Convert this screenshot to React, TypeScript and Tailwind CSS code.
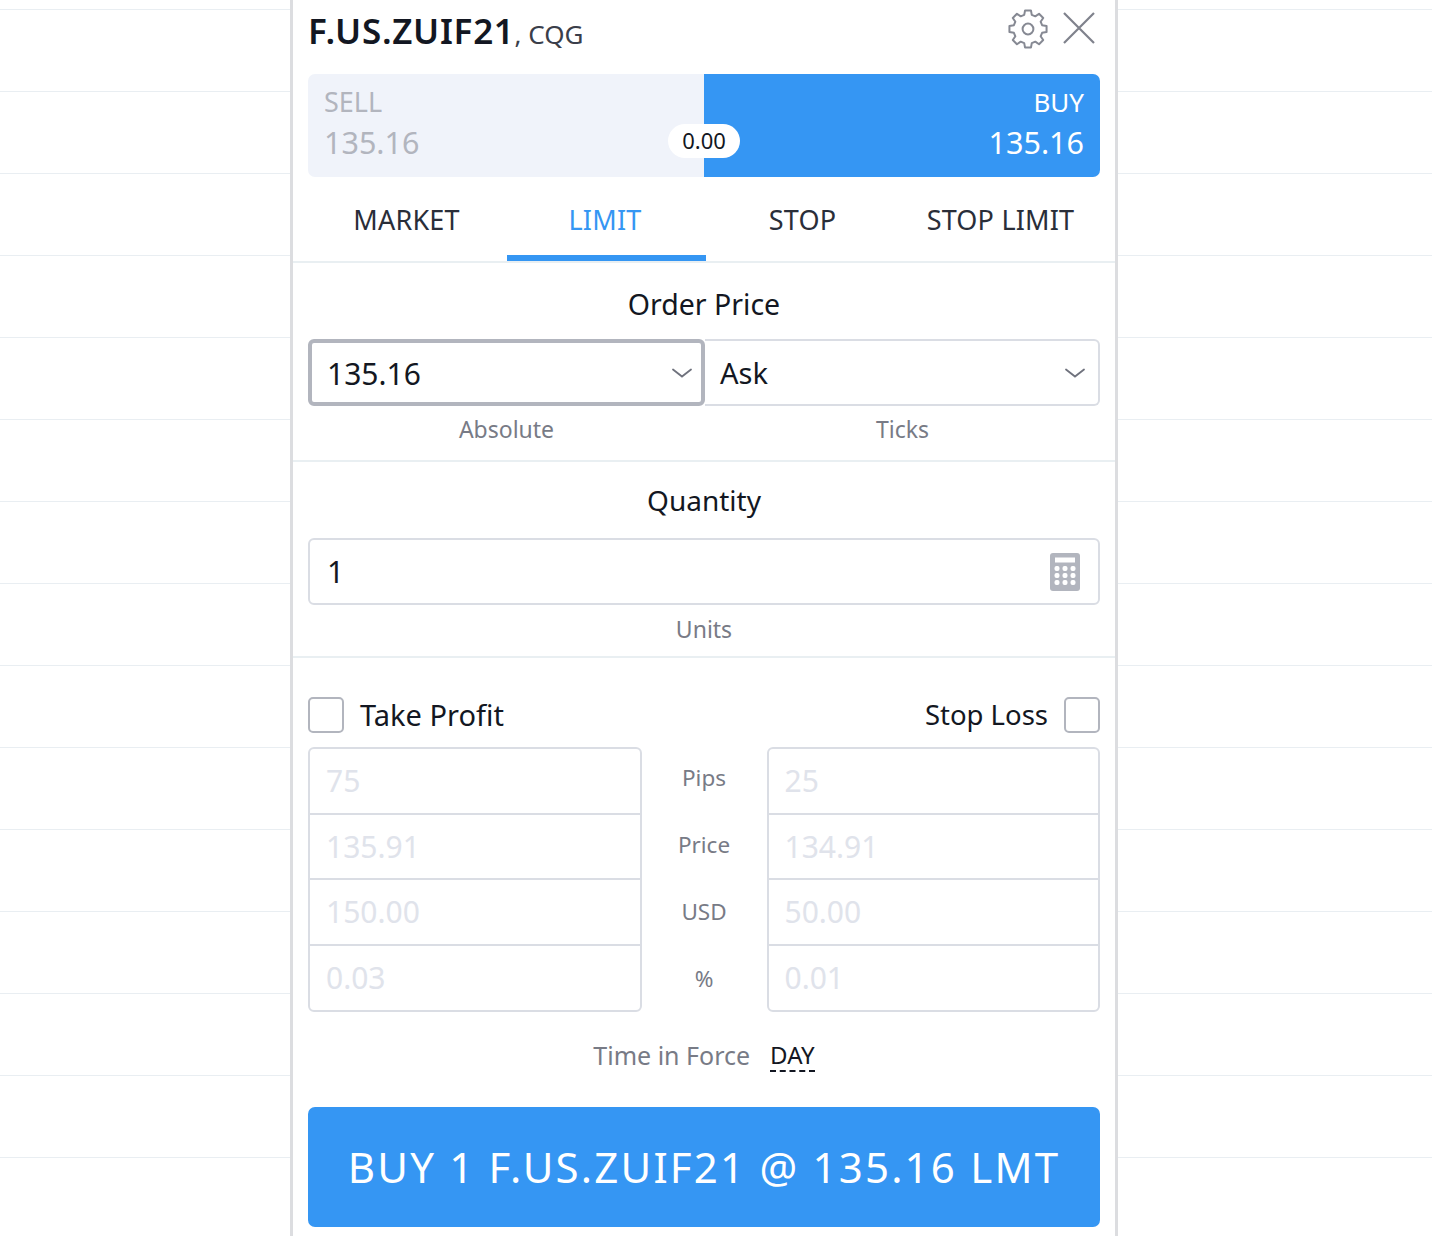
import React from "react";

const ff = "font-['Noto_Sans','Liberation_Sans',sans-serif]";

function Chevron() {
  return (
    <svg width="22" height="12" viewBox="0 0 22 12" fill="none" stroke="#6f727d" strokeWidth="1.8" strokeLinecap="round">
      <path d="M2 2.5 L11 9.5 L20 2.5" />
    </svg>
  );
}

function gearPath() {
  const pts: string[] = [];
  const p = (r: number, deg: number) => {
    const a = (deg * Math.PI) / 180;
    return `${(22 + r * Math.cos(a)).toFixed(2)} ${(22 + r * Math.sin(a)).toFixed(2)}`;
  };
  for (let i = 0; i < 8; i++) {
    const c = -90 + i * 45;
    pts.push(p(14.6, c - 15), p(18.8, c - 9), p(18.8, c + 9), p(14.6, c + 15));
  }
  return `M${pts.join(" L")} Z`;
}

function Gear() {
  return (
    <svg width="44" height="44" viewBox="0 0 44 44" fill="none" stroke="#868993" strokeWidth="2" strokeLinejoin="round">
      <circle cx="22" cy="22" r="5.4" />
      <path d={gearPath()} />
    </svg>
  );
}

function Calc() {
  return (
    <svg width="30" height="38" viewBox="0 0 30 38">
      <rect x="0" y="0" width="30" height="38" rx="3" fill="#b2b5be" />
      <rect x="5" y="4.5" width="20" height="5" fill="#fff" />
      {[13, 20, 27].map((y) =>
        [4.5, 12.5, 20.5].map((x) => <rect key={`${x}-${y}`} x={x} y={y} width="5" height="5" rx="2" fill="#fff" />)
      )}
    </svg>
  );
}

const rowClass = ["h-[63.5px]", "h-[65.5px] border-t-2", "h-[65.5px] border-t-2", "flex-1 border-t-2"];

function Stack({ values }: { values: string[] }) {
  return (
    <div className="flex-1 rounded-[6px] border-2 border-[#dadde4] flex flex-col overflow-hidden">
      {values.map((v, i) => (
        <div key={v} className={`flex items-center pl-[16px] text-[30px] text-[#e0e3eb] border-[#dadde4] ${rowClass[i]}`}>
          {v}
        </div>
      ))}
    </div>
  );
}

const tabs = [
  { t: "MARKET", c: "w-[199px] pr-[2px] pt-[2px] text-[#2a2e39]" },
  { t: "LIMIT", c: "w-[199px] pr-[3px] pt-[8px] text-[#3596f3] border-b-[6px] border-[#3596f3]" },
  { t: "STOP", c: "w-[197px] pr-[4px] pt-[2px] text-[#2a2e39]" },
  { t: "STOP LIMIT", c: "w-[197px] pr-[2px] pt-[2px] text-[#2a2e39]" },
];

export default function App() {
  return (
    <div
      className={`${ff} w-[1432px] h-[1236px] overflow-hidden bg-white bg-[repeating-linear-gradient(to_bottom,#ffffff_0px,#ffffff_9px,#e9eef2_9px,#e9eef2_10px,#ffffff_10px,#ffffff_82px)]`}
    >
      <div className="w-[828px] h-[1236px] ml-[290px] bg-white border-x-[3px] border-[#dcdde0] px-[15px] flex flex-col text-[#131722]">
        {/* header */}
        <div className="h-[74px] shrink-0 flex items-start justify-between">
          <div className="pt-[8px] flex items-baseline whitespace-nowrap">
            <span className="text-[35px] leading-[46px] font-semibold tracking-[0.7px]">F.US.ZUIF21</span>
            <span className="text-[26px] leading-[46px] text-[#3a3e4a]">, CQG</span>
          </div>
          <div className="flex items-start gap-[12px] pr-[4px] pt-[7px]">
            <Gear />
            <svg width="34" height="34" viewBox="0 0 34 34" stroke="#7f828c" strokeWidth="2.2" className="mt-[4px]">
              <path d="M2 2 L32 32 M32 2 L2 32" />
            </svg>
          </div>
        </div>

        {/* sell/buy */}
        <div className="relative h-[103px] shrink-0 flex rounded-[7px] overflow-hidden">
          <div className="flex-1 bg-[#f0f3fa] px-[16px] pt-[10px] text-[#b2b5be]">
            <div className="text-[27px] leading-[36px]">SELL</div>
            <div className="text-[30.5px] leading-[44px]">135.16</div>
          </div>
          <div className="flex-1 bg-[#3596f3] px-[16px] pt-[10px] text-white text-right">
            <div className="text-[26px] leading-[36px]">BUY</div>
            <div className="text-[30.5px] leading-[44px]">135.16</div>
          </div>
          <div className="absolute left-[360px] top-[50px] w-[72px] h-[34px] pb-[1px] rounded-full bg-white flex items-center justify-center text-[22px] text-[#131722]">
            0.00
          </div>
        </div>

        {/* tabs */}
        <div className="h-[86px] shrink-0 flex mx-[-15px] px-[15px] border-b-2 border-[#e9eff2]">
          {tabs.map(({ t, c }) => (
            <div key={t} className={`h-[84px] flex items-center justify-center text-[27px] tracking-[0.2px] ${c}`}>
              {t}
            </div>
          ))}
        </div>

        {/* order price */}
        <div className="h-[199px] shrink-0 flex flex-col mx-[-15px] px-[15px] border-b-2 border-[#e9eff2]">
          <div className="h-[76px] shrink-0 pt-[7px] flex items-center justify-center text-[28.5px] text-[#131722]">Order Price</div>
          <div className="h-[67px] shrink-0 flex">
            <div className="w-[397px] shrink-0 rounded-[6px] border-[4px] border-[#b2b5be] flex items-center justify-between pl-[15px] pr-[8px] pt-[1px] text-[30px]">
              <span>135.16</span>
              <Chevron />
            </div>
            <div className="flex-1 rounded-r-[6px] border-y-2 border-r-2 border-[#dadde4] flex items-center justify-between pl-[15px] pr-[12px] pt-[1px] text-[29px]">
              <span>Ask</span>
              <Chevron />
            </div>
          </div>
          <div className="h-[47px] shrink-0 flex text-[23px] text-[#787b86]">
            <div className="w-[397px] shrink-0 flex items-center justify-center">Absolute</div>
            <div className="flex-1 flex items-center justify-center">Ticks</div>
          </div>
        </div>

        {/* quantity */}
        <div className="h-[196px] shrink-0 flex flex-col mx-[-15px] px-[15px] border-b-2 border-[#e9eff2]">
          <div className="h-[76px] shrink-0 flex items-center justify-center text-[28px]">Quantity</div>
          <div className="h-[67px] shrink-0 rounded-[6px] border-2 border-[#dadde4] flex items-center justify-between pl-[17px] pr-[18px] text-[30px]">
            <span>1</span>
            <Calc />
          </div>
          <div className="h-[48px] shrink-0 flex items-center justify-center text-[23px] text-[#787b86]">Units</div>
        </div>

        {/* checkboxes */}
        <div className="h-[89px] shrink-0 flex items-end pb-[14px] justify-between">
          <div className="flex items-center gap-[16px]">
            <div className="w-[36px] h-[36px] rounded-[5px] border-2 border-[#b2b5be]" />
            <span className="leading-[35px] pb-[1px] text-[29px]">Take Profit</span>
          </div>
          <div className="flex items-center gap-[16px]">
            <span className="leading-[35px] pb-[1px] text-[27.5px]">Stop Loss</span>
            <div className="w-[36px] h-[36px] rounded-[5px] border-2 border-[#b2b5be]" />
          </div>
        </div>

        {/* brackets */}
        <div className="h-[265px] shrink-0 flex">
          <Stack values={["75", "135.91", "150.00", "0.03"]} />
          <div className="w-[125px] shrink-0 flex flex-col text-[22.5px] text-[#787b86]">
            {["Pips", "Price", "USD", "%"].map((l) => (
              <div key={l} className="h-[67px] shrink-0 flex items-center justify-center pb-[5px]">
                {l}
              </div>
            ))}
          </div>
          <Stack values={["25", "134.91", "50.00", "0.01"]} />
        </div>

        {/* tif */}
        <div className="h-[95px] shrink-0 flex items-center justify-center gap-[20px] pb-[7px] text-[25px] text-[#787b86]">
          <span>Time in Force</span>
          <span className="text-[#131722] leading-[30px] border-b-2 border-dashed border-[#131722] text-[24px]">DAY</span>
        </div>

        {/* submit */}
        <div className="h-[120px] shrink-0 rounded-[7px] bg-[#3596f3] flex items-center justify-center pb-[1px] text-white text-[42px] tracking-[2.2px] whitespace-nowrap">
          BUY 1 F.US.ZUIF21 @ 135.16 LMT
        </div>
      </div>
    </div>
  );
}
